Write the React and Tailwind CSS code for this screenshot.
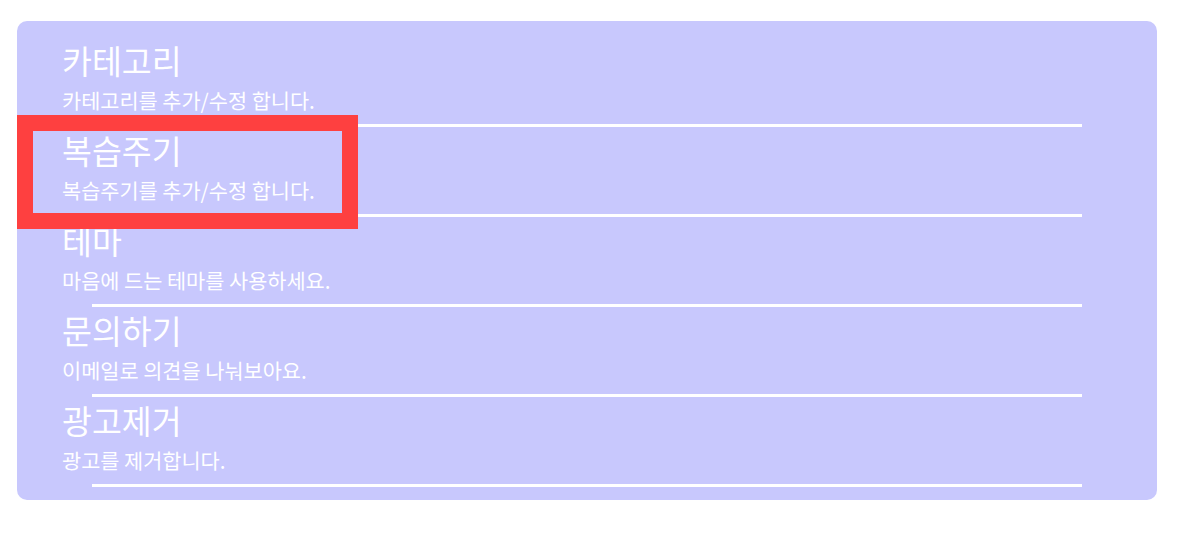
import React from 'react';

const items = [
  { title: '카테고리', desc: '카테고리를 추가/수정 합니다.' },
  { title: '복습주기', desc: '복습주기를 추가/수정 합니다.' },
  { title: '테마', desc: '마음에 드는 테마를 사용하세요.' },
  { title: '문의하기', desc: '이메일로 의견을 나눠보아요.' },
  { title: '광고제거', desc: '광고를 제거합니다.' },
];

function SettingRow({ title, desc }) {
  return (
    <div className="flex flex-col h-[90px]">
      <div className="text-[32.5px] leading-[46px] text-white">{title}</div>
      <div className="text-[20.8px] leading-[34px] text-white">{desc}</div>
      <div className="mt-auto mx-[30px] h-[3px] bg-white" />
    </div>
  );
}

export default function App() {
  return (
    <div
      className="w-[1178px] h-[551px] bg-white pt-[21px] pl-[17px]"
      style={{ fontFamily: '"Noto Sans CJK KR", "Noto Sans", sans-serif' }}
    >
      <div className="relative w-[1140px] h-[479px] rounded-[10px] bg-[#c8c8fd] pt-[16px] px-[45px]">
        {items.map((item) => (
          <SettingRow key={item.title} {...item} />
        ))}

        {/* highlight box */}
        <div className="absolute left-0 top-[94px] w-[341px] h-[114px] border-[16px] border-[#fe4040]" />
      </div>
    </div>
  );
}
